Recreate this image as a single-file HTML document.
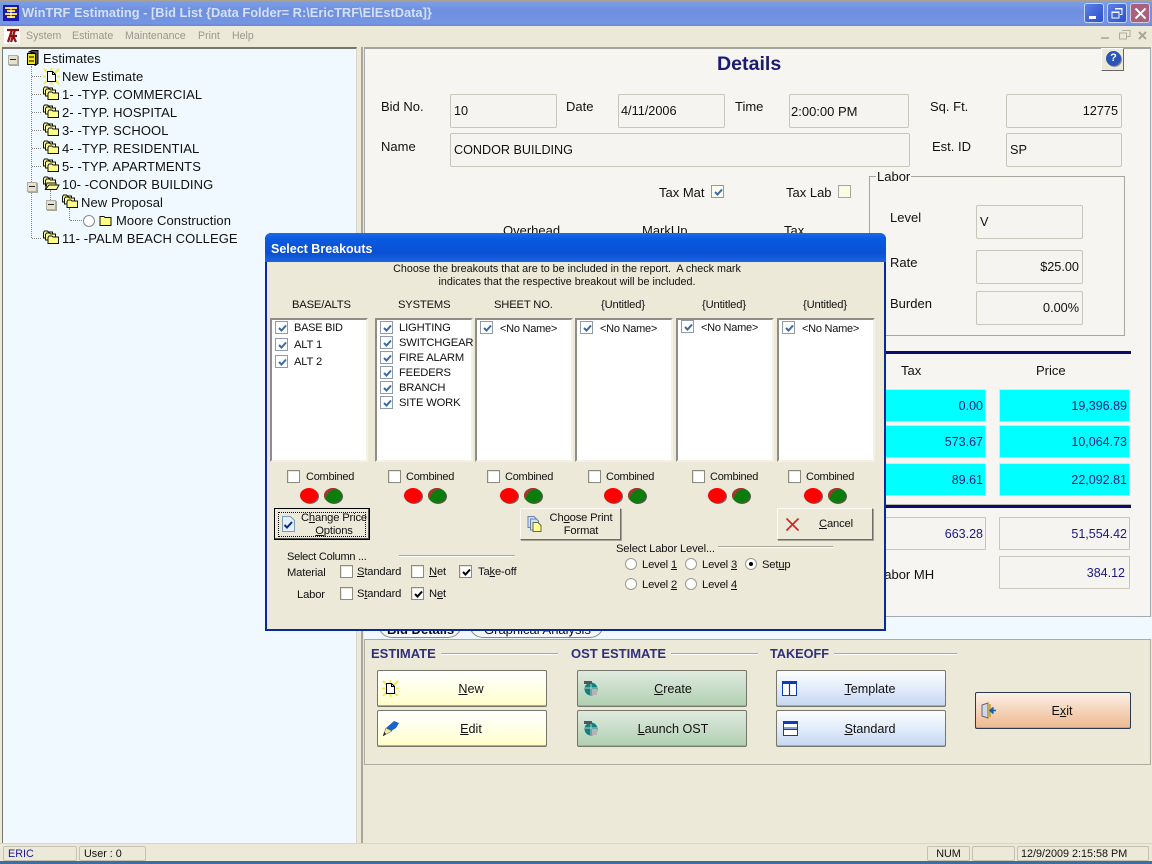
<!DOCTYPE html>
<html><head><meta charset="utf-8"><style>
html,body{margin:0;padding:0}
body{width:1152px;height:864px;overflow:hidden;position:relative;background:#ece9d8;font:13px/14px "Liberation Sans",sans-serif;color:#111}
.a{position:absolute}
.t{position:absolute;white-space:nowrap}
.d{font-size:11.2px;letter-spacing:-.15px;margin-top:1px}
.e{font-size:11px;letter-spacing:-.25px;margin-top:1px}
.m{font-size:10.6px;color:#9a988e;margin-top:1px}
.f{position:absolute;box-sizing:border-box;border:1px solid #c9c6ba;border-radius:2px;background:#f5f4f1;line-height:33px;padding:0 3px;white-space:nowrap;font-size:12.7px}
.c{position:absolute;box-sizing:border-box;border:1px solid #bdbab0;border-radius:1px;background:#00ffff;color:#1a1a80;text-align:right;padding-right:2px;line-height:33px;outline:1px solid #e4e2da;outline-offset:-1px;font-size:12.5px}
.w{background:#f5f4f1;border-color:#c9c6ba;outline:0}
.lb{position:absolute;box-sizing:border-box;background:#fff;border:2px solid;border-color:#8f8d85 #f3f1e8 #f3f1e8 #8f8d85;top:318px;height:144px}
.cb{position:absolute;box-sizing:border-box;width:13px;height:13px;background:#fff;border:1px solid #8f9ba8}
.cb svg{position:absolute;left:1px;top:1px}
.k{position:absolute;box-sizing:border-box;width:13px;height:13px;background:#fff;border:1px solid #8b8b80;box-shadow:inset 1px 1px 0 #e8e6da}
.k svg{position:absolute;left:1px;top:1px}
.ov{position:absolute;width:18px;height:15px;border-radius:50%;top:488px;box-shadow:1px 1px 0 #666}
.r{background:#ff0000}
.g{background:#0c7d0c;box-shadow:1px 1px 0 #555,inset 4px 3px 0 -2px #a33}
.rb{position:absolute;box-sizing:border-box;width:12px;height:12px;border-radius:50%;background:#fff;border:1px solid #9a9a90}
.btn{position:absolute;box-sizing:border-box;border:1px solid #77766a;border-radius:2px;box-shadow:inset 0 -1px 0 #aaa;text-align:center;line-height:36px;font-size:12.6px;padding-left:18px}
.dbtn{position:absolute;box-sizing:border-box;background:#ece9d8;border:1px solid;border-color:#fbfaf5 #6f6e66 #6f6e66 #fbfaf5;box-shadow:1px 1px 0 #a5a398}
.hl{position:absolute;height:1px;background:#aaa89c;box-shadow:0 1px 0 #fff}
.sec{position:absolute;font-weight:bold;color:#2f2f80;font-size:13px;white-space:nowrap}
.sb{position:absolute;box-sizing:border-box;top:846px;height:15px;border:1px solid #c5c2b4;border-radius:2px;line-height:14px;font-size:10.8px;white-space:nowrap}
.v{position:absolute;border-left:1px dotted #888}
.h{position:absolute;border-top:1px dotted #888}
.ex{position:absolute;box-sizing:border-box;width:10px;height:10px;border:1px solid #b0ae9f;background:#e4e1d0;box-shadow:1px 1px 0 #a8a698}
.ex:after{content:"";position:absolute;left:1px;top:3px;width:6px;height:1px;background:#222}
.tr{letter-spacing:.09px}
u{text-decoration:underline}
</style></head><body>
<svg width="0" height="0" style="position:absolute">
<symbol id="fs" viewBox="0 0 16 16"><path d="M.5 3.500l1-1.500h3l1 1h4v6h-9z" fill="#ffffa0" stroke="#111"/><path d="M2.500 5.500l1-1.500h3l1 1h5v6h-10z" fill="#ffffa0" stroke="#111"/><path d="M5 8.500l1-1.500h3l1 1h5.500v6.500H5z" fill="#ffff88" stroke="#111"/></symbol>
<symbol id="chk" viewBox="0 0 11 11"><path d="M2 5l2.500 2.500L9 2.500" fill="none" stroke="#3b6ba5" stroke-width="2"/></symbol>
<symbol id="bk" viewBox="0 0 11 11"><path d="M2 5l2.500 2.500L9 2.500" fill="none" stroke="#000" stroke-width="2"/></symbol>
<symbol id="glb" viewBox="0 0 16 16"><circle cx="8" cy="9" r="6.500" fill="#157f80"/><path d="M8 3v12M2 8h12" stroke="#bcd0c8"/><rect x="9" y="9" width="5" height="6" fill="#b4b4b4"/><rect x="1" y="1" width="8" height="3" fill="#555"/></symbol>
</svg>

<!-- title bar -->
<div class="a" style="left:0;top:0;width:1152px;height:26px;background:linear-gradient(#7f9fe6,#6d8fe0 40%,#7596e2 90%,#6685d8);border-top:1px solid #a9a290;box-sizing:border-box"></div>
<svg class="a" style="left:3px;top:5px" width="16" height="16"><rect width="16" height="16" fill="#1a1ab0"/><path d="M2 3h12M4 6h8M2 9h12M4 12h8" stroke="#ffe040" stroke-width="2"/><path d="M8 3v10" stroke="#fff"/></svg>
<div class="t" style="left:22px;top:6px;font-weight:bold;font-size:12.85px;color:#d5e0f6">WinTRF Estimating - [Bid List {Data Folder= R:\EricTRF\ElEstData]}</div>
<div class="a" style="left:1084px;top:3px;width:20px;height:20px;border:1px solid #c8d4f0;border-radius:3px;box-sizing:border-box;background:linear-gradient(135deg,#5b80e4,#2b50cc)"><div class="a" style="left:4px;top:12px;width:7px;height:3px;background:#fff"></div></div>
<div class="a" style="left:1107px;top:3px;width:20px;height:20px;border:1px solid #c8d4f0;border-radius:3px;box-sizing:border-box;background:linear-gradient(135deg,#5b80e4,#2b50cc)"><svg class="a" style="left:3px;top:3px" width="12" height="12"><path d="M4 1.500h7v6H9M1 5h7v6H1zM1 5.500h7M4 2h7" fill="none" stroke="#fff"/></svg></div>
<div class="a" style="left:1130px;top:3px;width:20px;height:20px;border:1px solid #d8c8d8;border-radius:3px;box-sizing:border-box;background:#a8607c"><svg class="a" style="left:3px;top:3px" width="13" height="13"><path d="M1.500 1.500l10 10M11.500 1.500l-10 10" stroke="#fff" stroke-width="2"/></svg></div>

<!-- menu -->
<div class="a" style="left:0;top:26px;width:1152px;height:19px;background:#ece9d8"></div>
<div class="a" style="left:4px;top:27px;width:16px;height:17px;background:#fff"></div>
<svg class="a" style="left:5px;top:27px" width="15" height="17"><path d="M2 3h12M7 3L3 15M6 9h6M8 9l3 6M10 3L6 15" stroke="#901010" stroke-width="2.200" fill="none"/></svg>
<div class="t m" style="left:26px;top:28px">System</div>
<div class="t m" style="left:72px;top:28px">Estimate</div>
<div class="t m" style="left:125px;top:28px">Maintenance</div>
<div class="t m" style="left:198px;top:28px">Print</div>
<div class="t m" style="left:232px;top:28px">Help</div>
<div class="a" style="left:1101px;top:37px;width:8px;height:2px;background:#b8b6aa"></div>
<svg class="a" style="left:1119px;top:30px" width="12" height="10"><path d="M3 .5h8v6H8M.5 3h7v6h-7z" fill="none" stroke="#b0aea2"/></svg>
<svg class="a" style="left:1138px;top:31px" width="9" height="9"><path d="M1 1l7 7M8 1l-7 7" stroke="#a8a69a" stroke-width="2"/></svg>

<!-- tree -->
<div class="a" style="left:2px;top:47px;width:355px;height:797px;box-sizing:border-box;background:#eff9ff;border-top:2px solid #77766c;border-left:1px solid #77766c;border-right:1px solid #d8d6ca"></div>
<div class="v" style="left:31px;top:66px;height:172px"></div>
<div class="v" style="left:50px;top:190px;height:12px"></div>
<div class="v" style="left:69px;top:208px;height:12px"></div>
<div class="h" style="left:32px;top:76px;width:9px"></div><div class="h" style="left:32px;top:94px;width:9px"></div><div class="h" style="left:32px;top:112px;width:9px"></div><div class="h" style="left:32px;top:130px;width:9px"></div><div class="h" style="left:32px;top:148px;width:9px"></div><div class="h" style="left:32px;top:166px;width:9px"></div><div class="h" style="left:32px;top:238px;width:9px"></div><div class="h" style="left:70px;top:220px;width:12px"></div>
<div class="ex" style="left:8px;top:55px"></div><div class="ex" style="left:27px;top:182px"></div><div class="ex" style="left:46px;top:200px"></div>
<svg class="a" style="left:26px;top:50px" width="13" height="16"><path d="M3 2l3-1.500h6v13l-3 2V3z" fill="#555" stroke="#000"/><rect x="1.500" y="3.500" width="8" height="11" fill="#f0e030" stroke="#000"/><path d="M3 7h5M3 11h5" stroke="#000"/></svg>
<svg class="a" style="left:43px;top:68px" width="17" height="17"><path d="M1 1l4 4M16 1l-4 4M1 16l4-4M16 16l-4-4M8.500 0v3M8.500 14v3M0 8.500h3M14 8.500h3" stroke="#f2ea50" stroke-width="2"/><path d="M4.500 3.500h5l3 3v7h-8z" fill="#fff" stroke="#000"/><path d="M9.500 3.500v3h3" fill="none" stroke="#000"/></svg>
<svg class="a" style="left:43px;top:85px" width="16" height="16"><use href="#fs"/></svg>
<svg class="a" style="left:43px;top:103px" width="16" height="16"><use href="#fs"/></svg>
<svg class="a" style="left:43px;top:121px" width="16" height="16"><use href="#fs"/></svg>
<svg class="a" style="left:43px;top:139px" width="16" height="16"><use href="#fs"/></svg>
<svg class="a" style="left:43px;top:157px" width="16" height="16"><use href="#fs"/></svg>
<svg class="a" style="left:43px;top:175px" width="17" height="16"><path d="M.5 3.500l1-1.500h3l1 1h4v6h-9z" fill="#ffffa0" stroke="#111"/><path d="M2.500 5.500l1-1.500h3l1 1h5v6h-10z" fill="#ffffa0" stroke="#111"/><path d="M4 8h9v6.500H2.500z" fill="#ffff88" stroke="#111"/><path d="M6 10h10l-2.500 4.500h-11z" fill="#ffffa0" stroke="#111"/></svg>
<svg class="a" style="left:62px;top:193px" width="16" height="16"><use href="#fs"/></svg>
<svg class="a" style="left:43px;top:229px" width="16" height="16"><use href="#fs"/></svg>
<div class="a" style="left:83px;top:215px;width:10px;height:10px;border-radius:50%;border:1px solid #888;background:#fff"></div>
<svg class="a" style="left:99px;top:214px" width="13" height="12"><path d="M1 2.500h4l1 1h6v8H1z" fill="#ffff80" stroke="#111"/></svg>
<div class="t tr" style="left:43px;top:52px">Estimates</div>
<div class="t tr" style="left:62px;top:70px">New Estimate</div>
<div class="t tr" style="left:62px;top:88px">1- -TYP. COMMERCIAL</div>
<div class="t tr" style="left:62px;top:106px">2- -TYP. HOSPITAL</div>
<div class="t tr" style="left:62px;top:124px">3- -TYP. SCHOOL</div>
<div class="t tr" style="left:62px;top:142px">4- -TYP. RESIDENTIAL</div>
<div class="t tr" style="left:62px;top:160px">5- -TYP. APARTMENTS</div>
<div class="t tr" style="left:62px;top:178px">10- -CONDOR BUILDING</div>
<div class="t tr" style="left:81px;top:196px">New Proposal</div>
<div class="t tr" style="left:116px;top:214px">Moore Construction</div>
<div class="t tr" style="left:62px;top:232px">11- -PALM BEACH COLLEGE</div>

<!-- splitter / right side -->
<div class="a" style="left:361px;top:47px;width:2px;height:797px;background:#a8a69a"></div>
<div class="a" style="left:364px;top:47px;width:787px;height:570px;box-sizing:border-box;background:#f6f5f2;border:1px solid #a4aab0;border-top:2px solid #a4a69e"></div>
<div class="a" style="left:364px;top:617px;width:788px;height:22px;background:#eff9ff"></div>
<div class="t" style="left:717px;top:52px;font-size:19.6px;line-height:24px;font-weight:bold;color:#1a1a70">Details</div>
<div class="a" style="left:1101px;top:48px;width:23px;height:23px;box-sizing:border-box;background:#ece9d8;border:1px solid;border-color:#fff #666 #666 #fff"></div>
<div class="a" style="left:1106px;top:51px;width:15px;height:15px;border-radius:50%;background:#2a55b8;color:#fff;font:bold 11px/15px 'Liberation Sans',sans-serif;text-align:center;box-shadow:1px 1px 0 #889">?</div>

<div class="t" style="left:381px;top:100px">Bid No.</div>
<div class="f" style="left:450px;top:94px;width:107px;height:34px">10</div>
<div class="t" style="left:566px;top:100px">Date</div>
<div class="f" style="left:618px;top:94px;width:107px;height:34px;padding-left:2px">4/11/2006</div>
<div class="t" style="left:735px;top:100px">Time</div>
<div class="f" style="left:789px;top:94px;width:120px;height:34px;padding-left:1px;font-size:13px">2:00:00 PM</div>
<div class="t" style="left:930px;top:100px">Sq. Ft.</div>
<div class="f" style="left:1006px;top:94px;width:116px;height:34px;text-align:right">12775</div>
<div class="t" style="left:381px;top:140px">Name</div>
<div class="f" style="left:450px;top:133px;width:460px;height:34px;font-size:12.6px">CONDOR BUILDING</div>
<div class="t" style="left:932px;top:140px">Est. ID</div>
<div class="f" style="left:1006px;top:133px;width:116px;height:34px">SP</div>
<div class="t" style="left:659px;top:186px">Tax Mat</div>
<div class="cb" style="left:711px;top:185px;background:#fbfbf0"><svg width="11" height="11"><use href="#chk"/></svg></div>
<div class="t" style="left:786px;top:186px">Tax Lab</div>
<div class="cb" style="left:838px;top:185px;background:#fbfbe6;border-color:#a8a89a"></div>
<div class="a" style="left:869px;top:176px;width:256px;height:160px;box-sizing:border-box;border:1px solid #a8a69c"></div>
<div class="t" style="left:876px;top:170px;background:#f6f5f2;padding:0 1px">Labor</div>
<div class="t" style="left:503px;top:224px">Overhead</div>
<div class="t" style="left:642px;top:224px">MarkUp</div>
<div class="t" style="left:784px;top:224px">Tax</div>
<div class="t" style="left:890px;top:211px">Level</div>
<div class="f" style="left:976px;top:205px;width:107px;height:34px">V</div>
<div class="t" style="left:890px;top:256px">Rate</div>
<div class="f" style="left:976px;top:250px;width:107px;height:34px;text-align:right">$25.00</div>
<div class="t" style="left:890px;top:297px">Burden</div>
<div class="f" style="left:976px;top:291px;width:107px;height:34px;text-align:right">0.00%</div>
<div class="a" style="left:880px;top:351px;width:251px;height:3px;background:#0a0a70"></div>
<div class="a" style="left:880px;top:505px;width:251px;height:3px;background:#0a0a70;box-shadow:0 -1px 0 #b8b6aa"></div>
<div class="t" style="left:901px;top:364px">Tax</div>
<div class="t" style="left:1036px;top:364px">Price</div>
<div class="c" style="left:880px;top:389px;width:106px;height:33px">0.00</div>
<div class="c" style="left:999px;top:389px;width:131px;height:33px">19,396.89</div>
<div class="c" style="left:880px;top:425px;width:106px;height:33px">573.67</div>
<div class="c" style="left:999px;top:425px;width:131px;height:33px">10,064.73</div>
<div class="c" style="left:880px;top:463px;width:106px;height:33px">89.61</div>
<div class="c" style="left:999px;top:463px;width:131px;height:33px">22,092.81</div>
<div class="c w" style="left:880px;top:517px;width:106px;height:33px">663.28</div>
<div class="c w" style="left:999px;top:517px;width:131px;height:33px">51,554.42</div>
<div class="t" style="left:877px;top:568px">Labor MH</div>
<div class="c w" style="left:999px;top:556px;width:131px;height:33px;padding-right:4px">384.12</div>

<!-- tabs -->
<div class="a" style="left:378px;top:610px;width:84px;height:28px;box-sizing:border-box;border:1px solid #8a8a80;border-top:0;border-radius:0 0 14px 14px;background:#f4f9fa"></div>
<div class="a" style="left:469px;top:610px;width:135px;height:28px;box-sizing:border-box;border:1px solid #8a8a80;border-top:0;border-radius:0 0 14px 14px;background:#f4f9fa"></div>
<div class="t" style="left:387px;top:623px;font-weight:bold">Bid Details</div>
<div class="t" style="left:484px;top:623px">Graphical Analysis</div>

<!-- bottom panel -->
<div class="a" style="left:364px;top:639px;width:787px;height:126px;box-sizing:border-box;background:#ece9d8;border:1px solid #aeaca0"></div>
<div class="sec" style="left:371px;top:647px">ESTIMATE</div><div class="hl" style="left:441px;top:653px;width:117px"></div>
<div class="sec" style="left:571px;top:647px">OST ESTIMATE</div><div class="hl" style="left:671px;top:653px;width:87px"></div>
<div class="sec" style="left:770px;top:647px;font-size:12.7px">TAKEOFF</div><div class="hl" style="left:834px;top:653px;width:123px"></div>

<div class="btn" style="left:377px;top:670px;width:170px;height:37px;background:linear-gradient(#fff,#ffffd8 80%,#fdfdc0)"><u>N</u>ew</div>
<div class="btn" style="left:377px;top:710px;width:170px;height:37px;background:linear-gradient(#fff,#ffffd8 80%,#fdfdc0)"><u>E</u>dit</div>
<div class="btn" style="left:577px;top:670px;width:170px;height:37px;padding-left:22px;background:linear-gradient(#dfeadf,#b0d0b2)"><u>C</u>reate</div>
<div class="btn" style="left:577px;top:710px;width:170px;height:37px;padding-left:22px;background:linear-gradient(#dfeadf,#b0d0b2)"><u>L</u>aunch OST</div>
<div class="btn" style="left:776px;top:670px;width:170px;height:37px;background:linear-gradient(#fdfeff,#c6d8f4)"><u>T</u>emplate</div>
<div class="btn" style="left:776px;top:710px;width:170px;height:37px;background:linear-gradient(#fdfeff,#c6d8f4)"><u>S</u>tandard</div>
<div class="btn" style="left:975px;top:692px;width:156px;height:37px;border-color:#2a3a50;background:linear-gradient(#fbf0e6,#eeb88e)">E<u>x</u>it</div>
<svg class="a" style="left:382px;top:680px" width="17" height="17"><path d="M1 1l4 4M16 1l-4 4M1 16l4-4M16 16l-4-4M8.500 0v3M8.500 14v3M0 8.500h3M14 8.500h3" stroke="#f2ea50" stroke-width="2"/><path d="M4.500 3.500h5l3 3v7h-8z" fill="#fff" stroke="#000"/><path d="M9.500 3.500v3h3" fill="none" stroke="#000"/></svg>
<svg class="a" style="left:382px;top:720px" width="18" height="17"><path d="M1 16l3-8 8-7 5 2-3 5-8 5z" fill="#1d62c8"/><path d="M1 16l3-8 6 3z" fill="#f4e8a0" stroke="#555" stroke-width=".5"/><path d="M1 16l1.500-4 1.500 2z" fill="#222"/></svg>
<svg class="a" style="left:583px;top:680px" width="16" height="16"><use href="#glb"/></svg>
<svg class="a" style="left:583px;top:720px" width="16" height="16"><use href="#glb"/></svg>
<svg class="a" style="left:782px;top:681px" width="15" height="15"><rect x=".5" y=".5" width="14" height="14" fill="#fff" stroke="#0a3fb0"/><path d="M1 1.500h13M1 2.500h13" stroke="#0a3fb0"/><path d="M7.500 1v13" stroke="#0a3fb0" stroke-width="1.200"/></svg>
<svg class="a" style="left:783px;top:721px" width="15" height="15"><rect x=".5" y=".5" width="14" height="14" fill="#fff" stroke="#0a3fb0"/><path d="M1 1.500h13M1 2.500h13M1 7h13M1 8.500h13" stroke="#0a3fb0"/></svg>
<svg class="a" style="left:981px;top:702px" width="17" height="17"><path d="M1 3l6-2v15l-6-2z" fill="#d0d8e8" stroke="#667"/><path d="M7 2h3v13H7z" fill="#c8a850"/><path d="M15 8.500H11M12.500 5.500L9 8.500l3.500 3" fill="#1560b0" stroke="#1560b0" stroke-width="1.500"/></svg>

<!-- status -->
<div class="a" style="left:0;top:843px;width:1152px;height:18px;background:#ece9d8;border-top:1px solid #d8d6ca;box-sizing:border-box"></div>
<div class="sb" style="left:3px;width:74px;color:#1a1a9a;padding-left:4px">ERIC</div>
<div class="sb" style="left:79px;width:67px;padding-left:4px">User : 0</div>
<div class="sb" style="left:927px;width:43px;text-align:center">NUM</div>
<div class="sb" style="left:972px;width:43px"></div>
<div class="sb" style="left:1017px;width:132px;padding-left:3px">12/9/2009 2:15:58 PM</div>
<div class="a" style="left:0;top:861px;width:1152px;height:3px;background:#3a6ea5"></div>

<!-- dialog -->
<div class="a" style="left:265px;top:233px;width:621px;height:398px;box-sizing:border-box;background:#ece9d8;border:2px solid #0a2a9a;border-top:0;border-radius:6px 6px 0 0"></div>
<div class="a" style="left:265px;top:233px;width:621px;height:29px;border-radius:6px 6px 0 0;background:linear-gradient(#1a6ae8,#0a5ae0 20%,#0a50d4 70%,#1a66e0)"></div>
<div class="t" style="left:271px;top:242px;font-weight:bold;font-size:12.5px;color:#fff">Select Breakouts</div>
<div class="t" style="left:267px;top:263px;width:600px;text-align:center;font-size:10.75px;line-height:13px">Choose the breakouts that are to be included in the report.&nbsp; A check mark<br>indicates that the respective breakout will be included.</div>
<div class="t d" style="left:292px;top:297px">BASE/ALTS</div>
<div class="t d" style="left:398px;top:297px">SYSTEMS</div>
<div class="t d" style="left:494px;top:297px">SHEET NO.</div>
<div class="t d" style="left:601px;top:297px">{Untitled}</div>
<div class="t d" style="left:702px;top:297px">{Untitled}</div>
<div class="t d" style="left:803px;top:297px">{Untitled}</div>
<div class="lb" style="left:270px;width:98px"></div><div class="lb" style="left:375px;width:98px"></div><div class="lb" style="left:475px;width:98px"></div><div class="lb" style="left:575px;width:98px"></div><div class="lb" style="left:676px;width:98px"></div><div class="lb" style="left:777px;width:98px"></div>

<div class="cb" style="left:275px;top:321px"><svg width="11" height="11"><use href="#chk"/></svg></div><div class="t e" style="left:294px;top:320px">BASE BID</div>
<div class="cb" style="left:275px;top:338px"><svg width="11" height="11"><use href="#chk"/></svg></div><div class="t d" style="left:294px;top:337px">ALT 1</div>
<div class="cb" style="left:275px;top:355px"><svg width="11" height="11"><use href="#chk"/></svg></div><div class="t d" style="left:294px;top:354px">ALT 2</div>
<div class="cb" style="left:380px;top:321px"><svg width="11" height="11"><use href="#chk"/></svg></div><div class="t d" style="left:399px;top:320px">LIGHTING</div>
<div class="cb" style="left:380px;top:336px"><svg width="11" height="11"><use href="#chk"/></svg></div><div class="t d" style="left:399px;top:335px">SWITCHGEAR</div>
<div class="cb" style="left:380px;top:351px"><svg width="11" height="11"><use href="#chk"/></svg></div><div class="t d" style="left:399px;top:350px">FIRE ALARM</div>
<div class="cb" style="left:380px;top:366px"><svg width="11" height="11"><use href="#chk"/></svg></div><div class="t d" style="left:399px;top:365px">FEEDERS</div>
<div class="cb" style="left:380px;top:381px"><svg width="11" height="11"><use href="#chk"/></svg></div><div class="t d" style="left:399px;top:380px">BRANCH</div>
<div class="cb" style="left:380px;top:396px"><svg width="11" height="11"><use href="#chk"/></svg></div><div class="t d" style="left:399px;top:395px">SITE WORK</div>
<div class="cb" style="left:480px;top:321px"><svg width="11" height="11"><use href="#chk"/></svg></div><div class="t e" style="left:500px;top:321px">&lt;No Name&gt;</div>
<div class="cb" style="left:580px;top:321px"><svg width="11" height="11"><use href="#chk"/></svg></div><div class="t e" style="left:600px;top:321px">&lt;No Name&gt;</div>
<div class="cb" style="left:681px;top:320px"><svg width="11" height="11"><use href="#chk"/></svg></div><div class="t e" style="left:701px;top:320px">&lt;No Name&gt;</div>
<div class="cb" style="left:782px;top:321px"><svg width="11" height="11"><use href="#chk"/></svg></div><div class="t e" style="left:802px;top:321px">&lt;No Name&gt;</div>

<div class="k" style="left:287px;top:470px"></div><div class="t e" style="left:306px;top:469px">Combined</div>
<div class="k" style="left:388px;top:470px"></div><div class="t e" style="left:406px;top:469px">Combined</div>
<div class="k" style="left:487px;top:470px"></div><div class="t e" style="left:505px;top:469px">Combined</div>
<div class="k" style="left:588px;top:470px"></div><div class="t e" style="left:606px;top:469px">Combined</div>
<div class="k" style="left:692px;top:470px"></div><div class="t e" style="left:710px;top:469px">Combined</div>
<div class="k" style="left:788px;top:470px"></div><div class="t e" style="left:806px;top:469px">Combined</div>
<div class="ov r" style="left:300px"></div><div class="ov g" style="left:324px"></div>
<div class="ov r" style="left:404px"></div><div class="ov g" style="left:428px"></div>
<div class="ov r" style="left:500px"></div><div class="ov g" style="left:524px"></div>
<div class="ov r" style="left:604px"></div><div class="ov g" style="left:628px"></div>
<div class="ov r" style="left:708px"></div><div class="ov g" style="left:732px"></div>
<div class="ov r" style="left:804px"></div><div class="ov g" style="left:828px"></div>

<div class="dbtn" style="left:274px;top:508px;width:96px;height:32px;border:1px solid #000;box-shadow:inset -1px -1px 0 #555"></div>
<div class="a" style="left:278px;top:512px;width:88px;height:25px;box-sizing:border-box;border:1px dotted #000"></div>
<svg class="a" style="left:282px;top:516px" width="13" height="16"><path d="M.5.500h8l4 4v11H.5z" fill="#e6f0fa" stroke="#7a9ac0"/><path d="M2.500 9l2.500 2.500L10 6" fill="none" stroke="#0a2a90" stroke-width="2"/></svg>
<div class="t d" style="left:294px;top:511px;width:80px;text-align:center;line-height:13px">C<u>h</u>ange Price<br><u>O</u>ptions</div>
<div class="dbtn" style="left:520px;top:508px;width:101px;height:32px"></div>
<svg class="a" style="left:527px;top:515px" width="16" height="18"><path d="M1 1.500h6l2 2v9H1z" fill="#d8e0ee" stroke="#6a82a8"/><path d="M3.500 4h6l2 2v9h-8z" fill="#d8e0ee" stroke="#6a82a8"/><path d="M6 7.500h5l3 3v6H6z" fill="#ffff90" stroke="#665"/></svg>
<div class="t d" style="left:541px;top:511px;width:80px;text-align:center;line-height:13px">Ch<u>o</u>ose Print<br>Format</div>
<div class="dbtn" style="left:777px;top:508px;width:96px;height:32px"></div>
<svg class="a" style="left:785px;top:517px" width="15" height="15"><path d="M1.500 1.500l12 12M13.500 1.500l-12 12" stroke="#d82020" stroke-width="1.600"/></svg>
<div class="t d" style="left:819px;top:516px"><u>C</u>ancel</div>

<div class="t e" style="left:287px;top:549px">Select Column ...</div><div class="hl" style="left:399px;top:555px;width:116px"></div>
<div class="t d" style="left:287px;top:565px">Material</div>
<div class="k" style="left:340px;top:565px"></div><div class="t d" style="left:357px;top:564px"><u>S</u>tandard</div>
<div class="k" style="left:411px;top:565px"></div><div class="t d" style="left:429px;top:564px"><u>N</u>et</div>
<div class="k" style="left:459px;top:565px"><svg width="11" height="11"><use href="#bk"/></svg></div><div class="t d" style="left:478px;top:564px">Ta<u>k</u>e-off</div>
<div class="t d" style="left:297px;top:587px">Labor</div>
<div class="k" style="left:340px;top:587px"></div><div class="t d" style="left:357px;top:586px">S<u>t</u>andard</div>
<div class="k" style="left:411px;top:587px"><svg width="11" height="11"><use href="#bk"/></svg></div><div class="t d" style="left:429px;top:586px">N<u>e</u>t</div>

<div class="t d" style="left:616px;top:541px">Select Labor Level...</div><div class="hl" style="left:718px;top:546px;width:115px"></div>
<div class="rb" style="left:625px;top:558px"></div><div class="t d" style="left:642px;top:557px">Level <u>1</u></div>
<div class="rb" style="left:685px;top:558px"></div><div class="t d" style="left:702px;top:557px">Level <u>3</u></div>
<div class="rb" style="left:745px;top:558px"><div class="a" style="left:3px;top:3px;width:4px;height:4px;border-radius:50%;background:#000"></div></div><div class="t d" style="left:762px;top:557px">Set<u>u</u>p</div>
<div class="rb" style="left:625px;top:578px"></div><div class="t d" style="left:642px;top:577px">Level <u>2</u></div>
<div class="rb" style="left:685px;top:578px"></div><div class="t d" style="left:702px;top:577px">Level <u>4</u></div>
</body></html>
